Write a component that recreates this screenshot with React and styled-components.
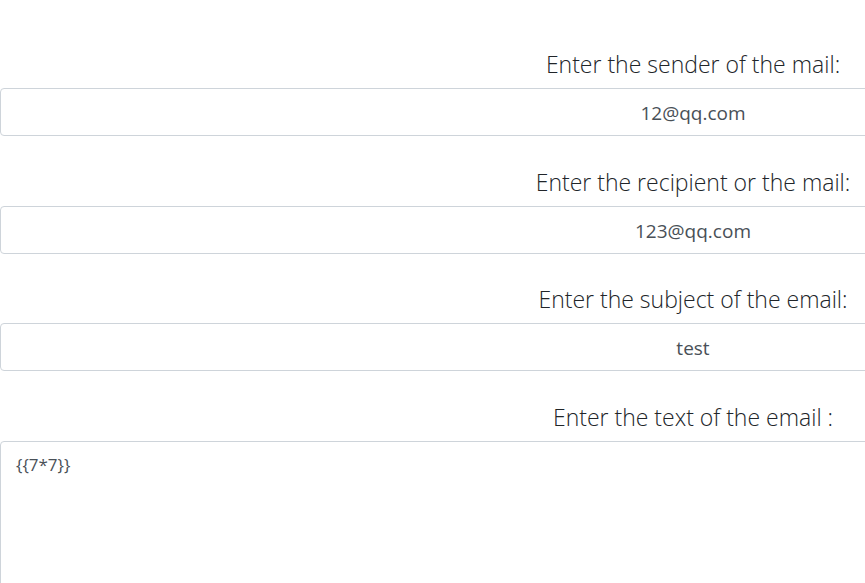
import React from 'react';
import styled, { createGlobalStyle } from 'styled-components';

const GlobalStyle = createGlobalStyle`
  html, body {
    margin: 0;
    padding: 0;
    background: #fff;
    overflow: hidden;
  }
  * {
    box-sizing: border-box;
  }
`;

const fields = [
  { label: 'Enter the sender of the mail:', value: '12@qq.com' },
  { label: 'Enter the recipient or the mail:', value: '123@qq.com' },
  { label: 'Enter the subject of the email:', value: 'test' },
];

export default function App() {
  return (
    <>
      <GlobalStyle />
      <Form>
        {fields.map((f, i) => (
          <Group key={i}>
            <Label>{f.label}</Label>
            <Input type="text" defaultValue={f.value} />
          </Group>
        ))}
        <Group>
          <Label>Enter the text of the email :</Label>
          <TextArea defaultValue="{{7*7}}" />
        </Group>
      </Form>
    </>
  );
}

const Form = styled.form`
  width: 1386px;
  padding-top: 46px;
  font-family: 'Open Sans', 'Noto Sans', sans-serif;
`;

const Group = styled.div`
  display: flex;
  flex-direction: column;
  margin-bottom: 27.67px;
`;

const Label = styled.label`
  display: block;
  text-align: center;
  font-size: 23px;
  font-weight: 300;
  line-height: 36px;
  color: #212529;
  margin-bottom: 6px;
`;

const Input = styled.input`
  display: block;
  width: 100%;
  height: 48px;
  padding: 9px 16px 7px;
  font-family: inherit;
  font-size: 19px;
  color: #495057;
  text-align: center;
  background: #fff;
  border: 1px solid #ced4da;
  border-radius: 4px;
  outline: none;
`;

const TextArea = styled.textarea`
  display: block;
  width: 100%;
  height: 200px;
  padding: 10px 15px;
  font-family: inherit;
  font-size: 17px;
  line-height: 1.5;
  color: #495057;
  background: #fff;
  border: 1px solid #ced4da;
  border-radius: 4px;
  resize: none;
  outline: none;
`;
